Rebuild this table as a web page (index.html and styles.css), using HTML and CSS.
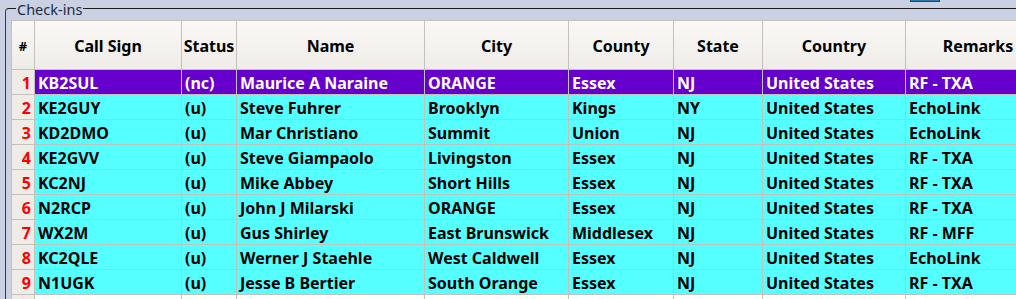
FILE: index.html
```html
<!DOCTYPE html>
<html>
<head>
<meta charset="utf-8">
<link rel="stylesheet" href="styles.css">
</head>
<body>
<div class="peek"></div>
<div class="group">
  <span class="legend">Check-ins</span>
  <div class="grid">
    <div class="h num">#</div><div class="h">Call Sign</div><div class="h">Status</div><div class="h">Name</div><div class="h">City</div><div class="h">County</div><div class="h">State</div><div class="h">Country</div><div class="h">Remarks</div>

    <div class="n">1</div><div class="c sel">KB2SUL</div><div class="c sel">(nc)</div><div class="c sel">Maurice A Naraine</div><div class="c sel">ORANGE</div><div class="c sel">Essex</div><div class="c sel">NJ</div><div class="c sel">United States</div><div class="c sel">RF - TXA</div>

    <div class="n">2</div><div class="c">KE2GUY</div><div class="c">(u)</div><div class="c">Steve Fuhrer</div><div class="c">Brooklyn</div><div class="c">Kings</div><div class="c">NY</div><div class="c">United States</div><div class="c">EchoLink</div>

    <div class="n">3</div><div class="c">KD2DMO</div><div class="c">(u)</div><div class="c">Mar Christiano</div><div class="c">Summit</div><div class="c">Union</div><div class="c">NJ</div><div class="c">United States</div><div class="c">EchoLink</div>

    <div class="n">4</div><div class="c">KE2GVV</div><div class="c">(u)</div><div class="c">Steve Giampaolo</div><div class="c">Livingston</div><div class="c">Essex</div><div class="c">NJ</div><div class="c">United States</div><div class="c">RF - TXA</div>

    <div class="n">5</div><div class="c">KC2NJ</div><div class="c">(u)</div><div class="c">Mike Abbey</div><div class="c">Short Hills</div><div class="c">Essex</div><div class="c">NJ</div><div class="c">United States</div><div class="c">RF - TXA</div>

    <div class="n">6</div><div class="c">N2RCP</div><div class="c">(u)</div><div class="c">John J Milarski</div><div class="c">ORANGE</div><div class="c">Essex</div><div class="c">NJ</div><div class="c">United States</div><div class="c">RF - TXA</div>

    <div class="n">7</div><div class="c">WX2M</div><div class="c">(u)</div><div class="c">Gus Shirley</div><div class="c">East Brunswick</div><div class="c">Middlesex</div><div class="c">NJ</div><div class="c">United States</div><div class="c">RF - MFF</div>

    <div class="n">8</div><div class="c">KC2QLE</div><div class="c">(u)</div><div class="c">Werner J Staehle</div><div class="c">West Caldwell</div><div class="c">Essex</div><div class="c">NJ</div><div class="c">United States</div><div class="c">EchoLink</div>

    <div class="n">9</div><div class="c">N1UGK</div><div class="c">(u)</div><div class="c">Jesse B Bertier</div><div class="c">South Orange</div><div class="c">Essex</div><div class="c">NJ</div><div class="c">United States</div><div class="c">RF - TXA</div>

    <div class="n"></div><div class="c e"></div><div class="c e"></div><div class="c e"></div><div class="c e"></div><div class="c e"></div><div class="c e"></div><div class="c e"></div><div class="c e"></div>
  </div>
</div>
</body>
</html>
```
FILE: styles.css
```css
html, body {
  margin: 0;
  padding: 0;
}
body {
  width: 1016px;
  height: 299px;
  overflow: hidden;
  position: relative;
  background: #c9d1e3;
  font-family: "Noto Sans", "Open Sans", sans-serif;
}
.peek {
  position: absolute;
  left: 910px;
  top: 0;
  width: 28px;
  height: 1px;
  background: #2b78a8;
  border: 1px solid #174a70;
  border-top: 0;
}
.group {
  position: relative;
  margin: 8px 0 0 5px;
  border-top: 1px solid #1b1b1b;
  border-left: 1px solid #3a3a3a;
  border-top-left-radius: 4px;
  padding: 11px 0 0 5px;
  height: 300px;
  overflow: hidden;
}
.legend {
  position: absolute;
  left: 10px;
  top: -10px;
  padding: 0 1px;
  background: #c9d1e3;
  font-size: 14.5px;
  line-height: 20px;
  color: #1d2b45;
}
.group {
  overflow: visible;
}
.grid {
  display: grid;
  grid-template-columns: 23px 147px 55px 188px 144px 105px 89px 143px 145px;
  grid-template-rows: 49px repeat(10, 25px);
  border-left: 1px solid #c4c1bd;
  border-top: 1px solid #c4c1bd;
  width: max-content;
  font-weight: 700;
  font-size: 16px;
}
.grid > div {
  box-sizing: border-box;
  border-right: 1px solid #c4c1bd;
  border-bottom: 1px solid #c4c1bd;
  white-space: nowrap;
  overflow: hidden;
  display: flex;
  align-items: center;
  padding-top: 2px;
}
.h {
  background: linear-gradient(#faf8f5, #efece8);
  justify-content: center;
  color: #000;
}
.h.num {
  font-size: 13px;
}
.n {
  background: #efebe7;
  color: #ff0000;
  justify-content: flex-end;
  padding-right: 3px;
}
.c {
  background: #55ffff;
  color: #000;
  padding-left: 3px;
}
.c.sel {
  background: #6600cc;
  color: #fff;
}
.c.e {
  background: #ffffff;
}
```
